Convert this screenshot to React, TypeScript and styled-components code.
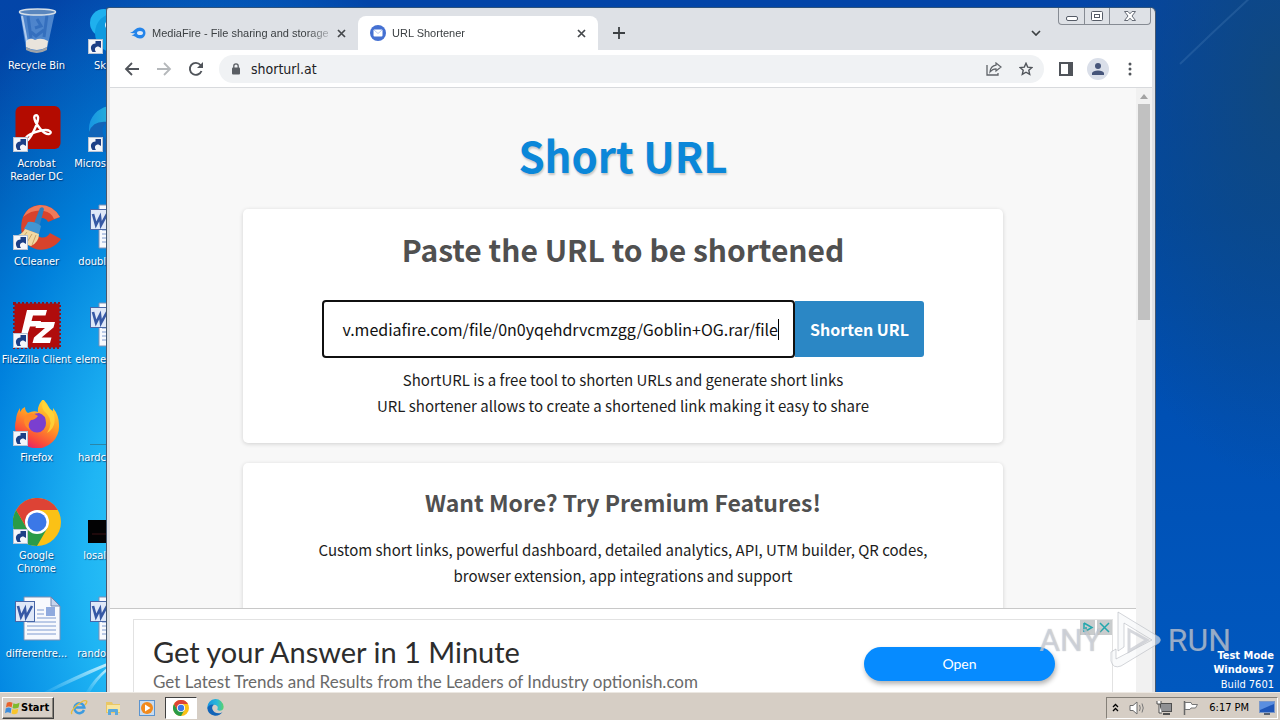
import React from "react";
import styled, { createGlobalStyle } from "styled-components";

const ui = `"DejaVu Sans Condensed", "DejaVu Sans", sans-serif`;
const source = `"Noto Sans CJK SC", "Noto Sans", sans-serif`;

const GlobalStyle = createGlobalStyle`
  *, *::before, *::after { box-sizing: border-box; }
  body { margin: 0; font-family: ${ui}; overflow: hidden; }
  button, input { font-family: inherit; }
  h1, h2, h3, p { margin: 0; }
  svg { display: block; flex: none; }
`;

const Screen = styled.div`
  height: 100vh;
  display: flex;
  flex-direction: column;
  position: relative;
`;

const Desktop = styled.main`
  flex: 1;
  min-height: 0;
  position: relative;
  overflow: hidden;
  display: flex;
  background:
    radial-gradient(ellipse 360px 620px at 210px 560px, #3fd8fb 0%, #1fb5f4 35%, rgba(0, 146, 236, 0.75) 65%, rgba(0, 110, 220, 0) 100%),
    radial-gradient(ellipse 200px 400px at 100% 12%, #10487f 0%, rgba(10, 70, 140, 0) 100%),
    linear-gradient(180deg, #0345a8 0%, #0049a4 30%, #0050b4 60%, #0058bf 100%);
`;

const Wallpaper = styled.svg`
  position: absolute;
  inset: 0;
  width: 100%;
  height: 100%;
`;

const IconColumn = styled.ul<{ $cut?: boolean }>`
  list-style: none;
  margin: 0;
  padding: 8px 0 0;
  width: ${(p) => (p.$cut ? "31px" : "75px")};
  overflow: hidden;
  position: relative;
  flex: none;
`;

const Shortcut = styled.li<{ $cut?: boolean }>`
  height: 98px;
  display: flex;
  flex-direction: column;
  align-items: ${(p) => (p.$cut ? "flex-end" : "flex-start")};
  gap: 3px;
  & > svg { margin-left: 13px; }
  & > span {
    width: ${(p) => (p.$cut ? "auto" : "73px")};
    text-align: center;
    font-size: 11px;
    line-height: 13px;
    color: #fff;
    white-space: nowrap;
    text-shadow: 1px 1px 1px rgba(0, 20, 70, 0.6);
  }
`;

const CutIcon = styled.div`
  width: 18px;
  height: 48px;
  overflow: hidden;
`;

const Window = styled.section`
  position: absolute;
  top: 8px;
  bottom: 0;
  left: 106px;
  right: 124px;
  display: flex;
  flex-direction: column;
  padding: 0 3px;
  background: #dfe1e5;
  border: 1px solid #46586f;
  border-width: 0 1px;
  border-radius: 3px 5px 0 0;
  box-shadow: 0 -1px 0 #2d537d;
`;

const TabStrip = styled.header`
  height: 42px;
  flex: none;
  display: flex;
  align-items: flex-end;
  padding-left: 8px;
  background: #dee1e6;
`;

const Tab = styled.div<{ $active?: boolean }>`
  width: 240px;
  height: 34px;
  display: flex;
  align-items: center;
  padding: 0 10px 0 12px;
  gap: 6px;
  border-radius: 8px 8px 0 0;
  background: ${(p) => (p.$active ? "#fff" : "transparent")};
  color: #3c4043;
  font-family: "Liberation Sans", sans-serif;
  font-size: 11px;
`;

const TabTitle = styled.span`
  flex: 1;
  overflow: hidden;
  white-space: nowrap;
  mask-image: linear-gradient(90deg, #000 88%, rgba(0, 0, 0, 0.3) 100%);
`;

const IconButton = styled.button<{ $size?: number }>`
  width: ${(p) => p.$size ?? 32}px;
  height: ${(p) => Math.min(p.$size ?? 32, 34)}px;
  flex: none;
  padding: 0;
  border: 0;
  background: none;
  display: grid;
  place-items: center;
`;

const StripSpace = styled.div`
  flex: 1;
`;

const StripRight = styled.div`
  display: flex;
  align-self: stretch;
  align-items: flex-start;
  & > ${IconButton} { margin: 9px 6px 0 0; }
`;

const WindowButtons = styled.div`
  display: flex;
  height: 17px;
  margin-right: 1px;
  border: 1px solid #868b93;
  border-top: 0;
  border-radius: 0 0 4px 4px;
`;

const WindowButton = styled.button<{ $wide?: boolean }>`
  width: ${(p) => (p.$wide ? 41 : 25)}px;
  padding: 0;
  border: 0;
  background: none;
  display: grid;
  place-items: center;
  & + & { border-left: 1px solid #868b93; }
`;

const Toolbar = styled.nav`
  height: 38px;
  flex: none;
  display: flex;
  align-items: center;
  padding: 0 6px;
  background: #fff;
  border-bottom: 1px solid #d8dadd;
`;

const Omnibox = styled.div`
  flex: 1;
  height: 28px;
  margin: 0 6px 0 7px;
  padding: 0 2px 0 12px;
  display: flex;
  align-items: center;
  border-radius: 14px;
  background: #f0f2f4;
`;

const Address = styled.input`
  flex: 1;
  min-width: 0;
  border: 0;
  padding: 0 0 0 10px;
  background: none;
  outline: 0;
  color: #202124;
  font-size: 14px;
  line-height: 20px;
`;

const Avatar = styled.span`
  width: 22px;
  height: 22px;
  border-radius: 50%;
  background: #dadfe9;
  display: grid;
  place-items: center;
`;

const Viewport = styled.div`
  flex: 1;
  min-height: 0;
  display: flex;
  background: #f8f8f8;
`;

const PageColumn = styled.div`
  flex: 1;
  min-width: 0;
  display: flex;
  flex-direction: column;
`;

const Page = styled.div`
  flex: 1;
  min-height: 0;
  overflow: hidden;
  display: flex;
  flex-direction: column;
  align-items: center;
  gap: 20px;
  font-family: ${source};
  color: #1c1c1c;
`;

const SiteTitle = styled.h1`
  flex: none;
  padding-top: 35px;
  height: 101px;
  font-size: 42px;
  line-height: 64px;
  font-weight: 700;
  color: #0b87d9;
  text-shadow: 1px 2px 2px rgba(0, 0, 0, 0.2);
`;

const Card = styled.section`
  width: 74%;
  flex: none;
  padding: 18px 24px 24px;
  display: flex;
  flex-direction: column;
  align-items: center;
  text-align: center;
  background: #fff;
  border-radius: 5px;
  box-shadow: 0 1px 4px rgba(0, 0, 0, 0.16);
`;

const CardTitle = styled.h2<{ $small?: boolean }>`
  font-size: ${(p) => (p.$small ? 23 : 30)}px;
  line-height: ${(p) => (p.$small ? 42 : 44)}px;
  margin-bottom: ${(p) => (p.$small ? 14 : 29)}px;
  font-weight: 700;
  color: #505050;
`;

const Text = styled.p`
  font-size: 15px;
  line-height: 26px;
`;

const Form = styled.form`
  width: 602px;
  max-width: 100%;
  display: flex;
  align-items: center;
  margin-bottom: 9px;
`;

const UrlBox = styled.label`
  flex: 1;
  min-width: 0;
  height: 58px;
  display: flex;
  align-items: center;
  padding: 0 14px 0 16px;
  border: 2px solid #101010;
  border-radius: 4px;
  background: #fff;
`;

const UrlInput = styled.input`
  flex: 1;
  min-width: 0;
  padding: 0;
  border: 0;
  outline: 0;
  background: none;
  text-align: right;
  color: #111;
  font-size: 16px;
  line-height: 26px;
`;

const Caret = styled.span`
  width: 1px;
  height: 21px;
  background: #000;
`;

const Submit = styled.button`
  width: 129px;
  height: 56px;
  padding: 0;
  border: 0;
  border-radius: 0 3px 3px 0;
  background: #2b87c5;
  color: #fff;
  font-size: 16px;
  font-weight: 700;
`;

const AdBar = styled.aside`
  height: 84px;
  flex: none;
  padding: 10px 23px 0;
  overflow: hidden;
  background: #fff;
  border-top: 1px solid #c8c8c8;
`;

const AdBox = styled.div`
  height: 90px;
  padding: 15px 57px 0 19px;
  display: flex;
  justify-content: space-between;
  border: 1px solid #e2e2e2;
  position: relative;
  font-family: "Lato", sans-serif;
`;

const AdTitle = styled.h3`
  font-size: 29px;
  line-height: 34px;
  font-weight: 400;
  color: #2d2d2d;
`;

const AdText = styled.p`
  font-size: 17px;
  line-height: 26px;
  color: #6a6a6a;
`;

const AdButton = styled.a`
  width: 191px;
  height: 34px;
  margin-top: 12px;
  border-radius: 17px;
  background: #068bff;
  color: #fff;
  text-decoration: none;
  text-align: center;
  font-size: 14px;
  line-height: 33px;
  box-shadow: 1px 3px 5px rgba(0, 0, 0, 0.3);
`;

const AdChoices = styled.div`
  position: absolute;
  top: 0;
  right: 0;
`;

const ScrollTrack = styled.div`
  width: 16px;
  padding: 0 2px;
  background: #f1f1f1;
`;

const ScrollArrow = styled.div`
  height: 16px;
  display: grid;
  place-items: center;
`;

const ScrollThumb = styled.div`
  height: 216px;
  background: #c1c1c1;
`;

const BuildInfo = styled.div`
  position: absolute;
  right: 6px;
  bottom: 0;
  text-align: right;
  color: #fff;
  font-size: 11px;
  line-height: 14px;
  & strong { display: block; }
  & span { display: block; line-height: 15px; }
`;

const Watermark = styled.div`
  position: absolute;
  right: 49px;
  bottom: 49px;
  display: flex;
  align-items: center;
  gap: 5px;
  font-family: "Roboto", sans-serif;
  font-size: 32px;
  line-height: 62px;
  color: rgba(225, 230, 238, 0.6);
  text-shadow: 0 0 1px rgba(90, 90, 100, 0.5);
  pointer-events: none;
`;

const Taskbar = styled.footer`
  height: 28px;
  flex: none;
  display: flex;
  align-items: center;
  padding: 2px 2px 0;
  background: #d6cec5;
  border-top: 1px solid #ece8e2;
`;

const StartButton = styled.button`
  width: 52px;
  height: 22px;
  padding: 0 2px;
  margin-right: 9px;
  display: flex;
  align-items: center;
  gap: 1px;
  background: #d6cec5;
  border: 1px solid #fff;
  border-right-color: #404040;
  border-bottom-color: #404040;
  box-shadow: inset -1px -1px 0 #8a857d;
  color: #000;
  font-size: 11px;
  font-weight: 700;
`;

const TaskButton = styled.button<{ $active?: boolean }>`
  width: 32px;
  height: 22px;
  margin-right: 2px;
  padding: 0;
  display: grid;
  place-items: center;
  background: ${(p) => (p.$active ? "#fff" : "transparent")};
  border: 1px solid;
  border-color: ${(p) => (p.$active ? "#404040 #fff #fff #404040" : "transparent")};
`;

const Tray = styled.div`
  margin-left: auto;
  height: 22px;
  width: 172px;
  padding: 0 2px 0 5px;
  display: flex;
  align-items: center;
  justify-content: space-between;
  border: 1px solid;
  border-color: #858078 #fff #fff #858078;
  font-size: 11px;
  color: #000;
`;

const Arrow = () => (
  <g transform="translate(0 31)">
    <rect x=".5" y=".5" width="14" height="14" fill="#f4f6fa" stroke="#b9c4d4" />
    <path d="M4.500 13C1.500 9 3 4.500 7.500 4.500V2L13 2V9L10.500 7.500C7 7.500 6 10 8 13Z" fill="#1c3f86" />
  </g>
);

const RecycleIcon = () => (
  <svg width="48" height="48" viewBox="0 0 48 48">
    <path d="M7 4L13 41Q24 48 34 41L42 4Z" fill="#8cb8ea" opacity=".55" />
    <path d="M13 33Q17 29 22 32Q28 29 35 33L34 39Q24 45 13 39Z" fill="#e9e4dc" />
    <path d="M13 39Q24 46 34 39L34 42Q24 48 13 42Z" fill="#a0a4a8" />
    <path d="M15 8L18 30M34 7L31 29M24 11L28 18L22 20M18 24L23 28L31 22" stroke="#2460b4" strokeWidth="3" fill="none" opacity=".6" />
    <path d="M9 8L14 34" stroke="#dceafc" strokeWidth="2" opacity=".7" />
    <ellipse cx="24.500" cy="4" rx="18" ry="3" fill="#5a86bd" stroke="#d6dfe8" strokeWidth="1.500" />
  </svg>
);

const AcrobatIcon = () => (
  <svg width="48" height="48" viewBox="0 0 48 48">
    <rect x="2.500" y="0" width="45" height="43" rx="6" fill="#b30b00" />
    <path d="M13 34C11 30 20 26.500 28 24.500C37 22.500 40 27 36 28C31 29 23 19 21.500 13C20 8 26 8 25 13C24 20 18 31 15 34Q14 35 13 34Z" fill="none" stroke="#fff" strokeWidth="2.400" />
    <Arrow />
  </svg>
);

const CCleanerIcon = () => (
  <svg width="48" height="48" viewBox="0 0 48 48">
    <path d="M47 13Q40 1 27 1Q13 2 9 16Q6 31 14 40Q24 49 37 44Q44 41 48 35L37 29Q33 35 27 33Q20 30 21 22Q23 13 30 14Q34 15 35 18Z" fill="#d8432c" />
    <path d="M47 13Q40 1 27 1Q15 2 10 13Q20 5 31 7Q38 8 41 15Z" fill="#f07a5a" />
    <path d="M27 4Q30 2 31 5L26 24L20 22Z" fill="#2d7fc0" />
    <path d="M15 18Q21 17 28 22L26 30L11 25Z" fill="#4296d2" />
    <path d="M12 25L26 30Q26 38 18 42L3 37L1 32Q9 31 12 25Z" fill="#f2d9a2" />
    <path d="M14 28L7 37M19 30L13 40M23 31L19 41" stroke="#cba467" strokeWidth="1" />
    <Arrow />
  </svg>
);

const FileZillaIcon = () => (
  <svg width="48" height="48" viewBox="0 0 48 48">
    <rect x="1.500" y="1.500" width="45" height="44" fill="#b00c0c" />
    <rect x="1" y="1" width="46" height="45" fill="none" stroke="#8c1420" strokeWidth="2" strokeDasharray="2 2" />
    <path d="M14 8H34L32.500 13.500H20L18.500 19H28L27 24.500H17L13 37H7Z" fill="#fff" />
    <path d="M24 20H42L40.500 25.500L28.500 35.500H38.500L37 41H19.500L21 35.500L32 26H22.500Z" fill="#fff" />
    <Arrow />
  </svg>
);

const FirefoxIcon = () => (
  <svg width="48" height="48" viewBox="0 0 48 48">
    <defs>
      <linearGradient id="ffBody" x1=".8" y1="0" x2=".3" y2="1">
        <stop offset="0" stopColor="#ffe23c" />
        <stop offset=".45" stopColor="#ff9a24" />
        <stop offset=".8" stopColor="#fa4a3c" />
        <stop offset="1" stopColor="#e3206c" />
      </linearGradient>
    </defs>
    <path d="M30 -1Q34 3 37 9L40 11V8Q46 15 46 25A22 22 0 1 1 3 20Q3 14 7 8V12Q9 8 12 7Q12 11 15 13Q21 10 25 12Q24 6 30 -1Z" fill="url(#ffBody)" />
    <path d="M15 23Q16 13 26 13Q33 15 33 23A9 9 0 0 1 15 24Z" fill="#7a3fd0" />
    <path d="M13 15Q19 11 25 16Q22 20 18 20Q14 24 17 30Q11 27 11 20Z" fill="#ff8a28" />
    <path d="M30 1Q27 9 34 14Q41 22 34 33Q44 27 41 14Q36 8 30 1Z" fill="#ffd83a" opacity=".8" />
    <Arrow />
  </svg>
);

const ChromeLogo = ({ size, children }: { size: number; children?: React.ReactNode }) => (
  <svg width={size} height={size} viewBox="0 0 48 48">
    <circle cx="24" cy="24" r="24" fill="#fbc116" />
    <path d="M3.200 12A24 24 0 0 0 24 48L34.400 30L24 24L13.600 30Z" fill="#2a9b48" />
    <path d="M3.200 12A24 24 0 0 1 44.800 12H24V24L13.600 30Z" fill="#dd4335" />
    <circle cx="24" cy="24" r="12" fill="#fff" />
    <circle cx="24" cy="24" r="9.500" fill="#3b78e7" />
    {children}
  </svg>
);

const WordIcon = () => (
  <svg width="48" height="48" viewBox="0 0 48 48">
    <path d="M11 1H38L47 10V44H11Z" fill="#f7f9fd" stroke="#7c8fb4" />
    <path d="M38 1V10H47Z" fill="#c5d3ec" stroke="#6f83ad" />
    <path d="M24 14H31M24 18H31M24 22H43M14 26H43M14 30H43M14 34H43M14 38H43" stroke="#7e9bd0" />
    <rect x="33" y="11" width="9" height="9" fill="#8faade" />
    <rect x="2.500" y="5.500" width="19" height="20" fill="#dfe8f8" stroke="#4867a8" />
    <path d="M5 10L8 21L12 13L13 21L19 10" fill="none" stroke="#3558a5" strokeWidth="2.600" />
  </svg>
);

const SkypeIcon = () => (
  <svg width="48" height="48" viewBox="0 0 48 48">
    <circle cx="16" cy="15" r="14" fill="#1fb0ee" />
    <circle cx="27" cy="25" r="20" fill="#0f9be0" />
    <circle cx="22" cy="17" r="5" fill="#e6f6ff" />
    <Arrow />
  </svg>
);

const EdgeIcon = ({ size = 48, children }: { size?: number; children?: React.ReactNode }) => (
  <svg width={size} height={size} viewBox="0 0 48 48">
    <defs>
      <linearGradient id={`edge${size}`} x1="0" y1="0" x2="1" y2="0">
        <stop offset="0" stopColor="#1795e2" />
        <stop offset=".6" stopColor="#2bb8d8" />
        <stop offset="1" stopColor="#5bd46a" />
      </linearGradient>
    </defs>
    <path d="M1 24A23 23 0 0 1 47 22Q47 33 35 33Q27 33 30 27Q32 17 20 16Q6 16 1 28Z" fill={`url(#edge${size})`} />
    <path d="M1 26Q5 14 20 16Q13 20 15 28Q19 41 36 40Q41 39 44 36Q36 48 22 47Q2 44 1 26Z" fill="#1264b8" />
    {children}
  </svg>
);

const BlackIcon = () => (
  <svg width="48" height="48" viewBox="0 0 48 48">
    <rect y="22" width="48" height="23" fill="#020203" />
    <path d="M4 36H18" stroke="#3a1014" />
  </svg>
);

const LineIcon = () => (
  <svg width="48" height="48" viewBox="0 0 48 48">
    <path d="M2 44.500H48" stroke="#2a86a8" />
  </svg>
);

const Close = () => (
  <svg width="9" height="9" viewBox="0 0 9 9">
    <path d="M1 1L8 8M8 1L1 8" stroke="#45484c" strokeWidth="1.700" />
  </svg>
);

const firstColumn = [
  { icon: <RecycleIcon />, label: "Recycle Bin" },
  { icon: <AcrobatIcon />, label: <>Acrobat<br />Reader DC</> },
  { icon: <CCleanerIcon />, label: "CCleaner" },
  { icon: <FileZillaIcon />, label: "FileZilla Client" },
  { icon: <FirefoxIcon />, label: "Firefox" },
  { icon: <ChromeLogo size={48}><Arrow /></ChromeLogo>, label: <>Google<br />Chrome</> },
  { icon: <WordIcon />, label: "differentre..." },
];

const secondColumn = [
  { icon: <SkypeIcon />, label: "Sk" },
  { icon: <EdgeIcon><Arrow /></EdgeIcon>, label: "Micros" },
  { icon: <WordIcon />, label: "doubl" },
  { icon: <WordIcon />, label: "eleme" },
  { icon: <LineIcon />, label: "hardc" },
  { icon: <BlackIcon />, label: "losal" },
  { icon: <WordIcon />, label: "rando" },
];

export default function App() {
  return (
    <Screen>
      <GlobalStyle />
      <Desktop>
        <Wallpaper viewBox="0 0 1280 692" preserveAspectRatio="none" aria-hidden="true">
          <defs>
            <linearGradient id="ray" x1="0" y1="1" x2="1" y2="0">
              <stop offset="0" stopColor="#9fe6ff" stopOpacity=".1" />
              <stop offset="1" stopColor="#d8f6ff" stopOpacity=".9" />
            </linearGradient>
          </defs>
          <path d="M44 692Q74 676 107 663V666Q76 680 50 692Z" fill="url(#ray)" />
          <path d="M86 692Q94 678 107 668V671Q97 680 90 692Z" fill="url(#ray)" />
          <path d="M1180 64Q1215 30 1252 -4" stroke="#4d82b8" strokeOpacity=".3" strokeWidth="2" fill="none" />
        </Wallpaper>
        <IconColumn>
          {firstColumn.map((s, i) => (
            <Shortcut key={i}>{s.icon}<span>{s.label}</span></Shortcut>
          ))}
        </IconColumn>
        <IconColumn $cut>
          {secondColumn.map((s, i) => (
            <Shortcut key={i} $cut><CutIcon>{s.icon}</CutIcon><span>{s.label}</span></Shortcut>
          ))}
        </IconColumn>

        <Window>
          <TabStrip>
            <Tab>
              <svg width="16" height="16" viewBox="0 0 16 16">
                <path d="M0 7.500Q3 7 5 4.500Q7 2.500 10 2.500A5.500 5.500 0 0 1 10 13.500Q7 13.500 5 11.500Q3 10.500 1.500 10.500Q4 9.500 5 8Q2 8.500 0 7.500Z" fill="#2484ea" />
                <ellipse cx="10" cy="8" rx="3" ry="2" fill="#dee9f8" />
              </svg>
              <TabTitle>MediaFire - File sharing and storage</TabTitle>
              <IconButton $size={14} aria-label="Close tab"><Close /></IconButton>
            </Tab>
            <Tab $active>
              <svg width="16" height="16" viewBox="0 0 16 16">
                <circle cx="8" cy="8" r="8" fill="#4470d2" />
                <rect x="3.500" y="4.500" width="9" height="7" rx="1" fill="#fff" />
                <path d="M4 5L8 8.500L12 5" stroke="#b9c9ee" fill="none" />
              </svg>
              <TabTitle>URL Shortener</TabTitle>
              <IconButton $size={14} aria-label="Close tab"><Close /></IconButton>
            </Tab>
            <IconButton $size={42} aria-label="New tab">
              <svg width="12" height="12" viewBox="0 0 12 12"><path d="M6 0V12M0 6H12" stroke="#3c4043" strokeWidth="1.800" /></svg>
            </IconButton>
            <StripSpace />
            <StripRight>
              <IconButton aria-label="Search tabs">
                <svg width="10" height="6" viewBox="0 0 10 6"><path d="M1 1L5 5L9 1" fill="none" stroke="#3c4043" strokeWidth="1.700" /></svg>
              </IconButton>
              <WindowButtons>
                <WindowButton aria-label="Minimize">
                  <svg width="12" height="12" viewBox="0 0 12 12"><rect x=".5" y="6.500" width="11" height="4" rx="1.500" fill="#fff" stroke="#555b66" /></svg>
                </WindowButton>
                <WindowButton aria-label="Restore">
                  <svg width="12" height="10" viewBox="0 0 12 10"><rect x=".5" y=".5" width="11" height="9" rx="1" fill="#fff" stroke="#555b66" /><rect x="3.500" y="3.500" width="5" height="3" fill="none" stroke="#555b66" /></svg>
                </WindowButton>
                <WindowButton $wide aria-label="Close">
                  <svg width="12" height="10" viewBox="0 0 12 10"><path d="M.5 .5H4L6 2.800L8 .5H11.500L8 5L11.500 9.500H8L6 7.200L4 9.500H.5L4 5Z" fill="#fff" stroke="#666b75" /></svg>
                </WindowButton>
              </WindowButtons>
            </StripRight>
          </TabStrip>

          <Toolbar>
            <IconButton aria-label="Back">
              <svg width="16" height="14" viewBox="0 0 16 14"><path d="M15 7H2M8 1L2 7L8 13" fill="none" stroke="#50545a" strokeWidth="1.800" /></svg>
            </IconButton>
            <IconButton aria-label="Forward">
              <svg width="16" height="14" viewBox="0 0 16 14"><path d="M1 7H14M8 1L14 7L8 13" fill="none" stroke="#b5b8bb" strokeWidth="1.800" /></svg>
            </IconButton>
            <IconButton aria-label="Reload">
              <svg width="16" height="16" viewBox="0 0 16 16"><path d="M13.500 10A6 6 0 1 1 12.500 4L14 5.500" fill="none" stroke="#50545a" strokeWidth="1.900" /><path d="M15 1V7H9Z" fill="#50545a" /></svg>
            </IconButton>
            <Omnibox>
              <svg width="10" height="12" viewBox="0 0 10 12"><rect x="1" y="4.500" width="8" height="7" rx="1" fill="#5a5e63" /><path d="M2.800 5V3A2.200 2.200 0 0 1 7.200 3V5" fill="none" stroke="#5a5e63" strokeWidth="1.300" /></svg>
              <Address aria-label="Address" defaultValue="shorturl.at" />
              <IconButton aria-label="Share">
                <svg width="16" height="14" viewBox="0 0 16 14"><path d="M1 3V13H12V11" fill="none" stroke="#5f6368" strokeWidth="1.300" /><path d="M10 1L15 5L10 9V6.800Q6.500 6.800 4 10Q4.500 4 10 3.200Z" fill="none" stroke="#5f6368" strokeWidth="1.200" /></svg>
              </IconButton>
              <IconButton aria-label="Bookmark">
                <svg width="14" height="14" viewBox="0 0 14 14"><path d="M7 1.300L8.700 5.100L12.900 5.500L9.800 8.300L10.700 12.400L7 10.200L3.300 12.400L4.200 8.300L1.100 5.500L5.300 5.100Z" fill="none" stroke="#50545a" strokeWidth="1.400" /></svg>
              </IconButton>
            </Omnibox>
            <IconButton aria-label="Side panel">
              <svg width="14" height="14" viewBox="0 0 14 14"><rect x="1" y="1" width="12" height="12" fill="#fff" stroke="#50545a" strokeWidth="2" /><rect x="9" y="1" width="4" height="12" fill="#50545a" /></svg>
            </IconButton>
            <IconButton aria-label="Profile">
              <Avatar>
                <svg width="12" height="12" viewBox="0 0 12 12"><circle cx="6" cy="3" r="3" fill="#46557a" /><path d="M0 12V10Q1 7.500 6 7.500Q11 7.500 12 10V12Z" fill="#46557a" /></svg>
              </Avatar>
            </IconButton>
            <IconButton aria-label="Menu">
              <svg width="4" height="14" viewBox="0 0 4 14"><circle cx="2" cy="2" r="1.500" fill="#50545a" /><circle cx="2" cy="7" r="1.500" fill="#50545a" /><circle cx="2" cy="12" r="1.500" fill="#50545a" /></svg>
            </IconButton>
          </Toolbar>

          <Viewport>
            <PageColumn>
              <Page>
                <SiteTitle>Short URL</SiteTitle>
                <Card>
                  <CardTitle>Paste the URL to be shortened</CardTitle>
                  <Form onSubmit={(e) => e.preventDefault()}>
                    <UrlBox>
                      <UrlInput aria-label="URL" defaultValue="v.mediafire.com/file/0n0yqehdrvcmzgg/Goblin+OG.rar/file" />
                      <Caret />
                    </UrlBox>
                    <Submit type="submit">Shorten URL</Submit>
                  </Form>
                  <Text>ShortURL is a free tool to shorten URLs and generate short links</Text>
                  <Text>URL shortener allows to create a shortened link making it easy to share</Text>
                </Card>
                <Card>
                  <CardTitle $small>Want More? Try Premium Features!</CardTitle>
                  <Text>
                    Custom short links, powerful dashboard, detailed analytics, API, UTM builder, QR codes,
                    <br />
                    browser extension, app integrations and support
                  </Text>
                </Card>
              </Page>
              <AdBar>
                <AdBox>
                  <div>
                    <AdTitle>Get your Answer in 1 Minute</AdTitle>
                    <AdText>Get Latest Trends and Results from the Leaders of Industry optionish.com</AdText>
                  </div>
                  <AdButton href="#open">Open</AdButton>
                  <AdChoices>
                    <svg width="32" height="15" viewBox="0 0 32 15">
                      <rect width="15" height="15" fill="#c9cccd" /><rect x="17" width="15" height="15" fill="#c9cccd" />
                      <path d="M4 3L12 7.500L6 11V7M4 3V12" fill="none" stroke="#22a7ad" strokeWidth="1.500" />
                      <path d="M20 3L29 12M29 3L20 12" stroke="#22a7ad" strokeWidth="1.500" />
                    </svg>
                  </AdChoices>
                </AdBox>
              </AdBar>
            </PageColumn>
            <ScrollTrack>
              <ScrollArrow>
                <svg width="8" height="5" viewBox="0 0 8 5"><path d="M0 5L4 0L8 5Z" fill="#a3a3a3" /></svg>
              </ScrollArrow>
              <ScrollThumb />
            </ScrollTrack>
          </Viewport>
        </Window>

        <BuildInfo>
          <strong>Test Mode</strong>
          <strong>Windows 7</strong>
          <span>Build 7601</span>
        </BuildInfo>
      </Desktop>

      <Watermark>
        <span>ANY</span>
        <svg width="56" height="62" viewBox="0 0 56 62">
          <path d="M11 3L52 28Q55 31 52 34L14 57Q6 60 4 52L4 43L9 40V50L45 31L17 14V38L11 42Z" fill="#f5f6f8" fillOpacity=".6" stroke="#aaaeb5" strokeOpacity=".5" />
          <path d="M22 21V42L40 31Z" fill="none" stroke="#c4c8cf" strokeOpacity=".7" strokeWidth="3" />
        </svg>
        <span>RUN</span>
      </Watermark>

      <Taskbar>
        <StartButton>
          <svg width="15" height="15" viewBox="0 0 16 16">
            <path d="M2 3Q5 1 8 3L7 8Q4 6 1 8Z" fill="#e8632c" />
            <path d="M9 3.500Q12 5 15.500 3L14.500 8Q11 10 8 8.500Z" fill="#7fba2c" />
            <path d="M.8 9Q4 7 6.800 9L6 14Q3 12 0 14Z" fill="#3c8ddc" />
            <path d="M7.800 9.500Q11 11 14.200 9L13.200 14Q10 16 7 14.500Z" fill="#f8c52c" />
          </svg>
          Start
        </StartButton>
        <TaskButton aria-label="Internet Explorer">
          <svg width="18" height="18" viewBox="0 0 18 18">
            <path d="M14 11A5 5 0 1 1 14.300 8.500H5" fill="none" stroke="#3c9be0" strokeWidth="2.500" />
            <path d="M2 15Q0 13 6 7Q14 0 16.500 2Q17.500 3 15 6" fill="none" stroke="#e8bd3c" strokeWidth="1.400" />
          </svg>
        </TaskButton>
        <TaskButton aria-label="Explorer">
          <svg width="18" height="18" viewBox="0 0 18 18">
            <path d="M2 3H8L9 5H16V14H2Z" fill="#e9c765" /><path d="M3 6H16V13H3Z" fill="#f8e6a0" />
            <path d="M4 16V11Q4 10 5 10H13Q14 10 14 11V16H11V13H7V16Z" fill="#5aa9dc" />
          </svg>
        </TaskButton>
        <TaskButton aria-label="Media Player">
          <svg width="18" height="18" viewBox="0 0 18 18">
            <rect x="1.500" y="1.500" width="15" height="15" fill="#c9dcf0" stroke="#5b94cf" /><circle cx="9" cy="9" r="6" fill="#f28a1c" /><path d="M7 5.500L12.500 9L7 12.500Z" fill="#fff" />
          </svg>
        </TaskButton>
        <TaskButton $active aria-label="Chrome"><ChromeLogo size={16} /></TaskButton>
        <TaskButton aria-label="Edge"><EdgeIcon size={17} /></TaskButton>
        <Tray>
          <svg width="7" height="9" viewBox="0 0 7 9"><path d="M1 4L3.500 1.500L6 4M1 8L3.500 5.500L6 8" fill="none" stroke="#000" strokeWidth="1.300" /></svg>
          <svg width="17" height="16" viewBox="0 0 17 16"><path d="M1 5.500H4L8 2V14L4 10.500H1Z" fill="#fff" stroke="#6c6c6c" /><path d="M10.500 5Q12 8 10.500 11M13 3.500Q15.500 8 13 12.500" fill="none" stroke="#777" /></svg>
          <svg width="17" height="16" viewBox="0 0 17 16"><rect x="4.500" y="3.500" width="11" height="8" fill="#8f9093" stroke="#4f4f4f" /><path d="M7 14H14" stroke="#4f4f4f" strokeWidth="2" /><path d="M1 1V4H5V1M3 4V13H6" fill="#fff" stroke="#4f4f4f" /></svg>
          <svg width="17" height="16" viewBox="0 0 17 16"><path d="M2.500 1V15" stroke="#666" strokeWidth="1.500" /><path d="M3 2.500H9L10 4.500H15.500L13.500 8H9L8 9.500H3Z" fill="#fff" stroke="#777" /></svg>
          <time>6:17 PM</time>
          <svg width="16" height="14" viewBox="0 0 16 14"><rect x=".5" y=".5" width="15" height="11" fill="#1f56b8" stroke="#7b98c9" /><path d="M1 9L15 3V1H1Z" fill="#5a8ee0" /><path d="M5 13H11" stroke="#56606e" strokeWidth="2" /></svg>
        </Tray>
      </Taskbar>
    </Screen>
  );
}
